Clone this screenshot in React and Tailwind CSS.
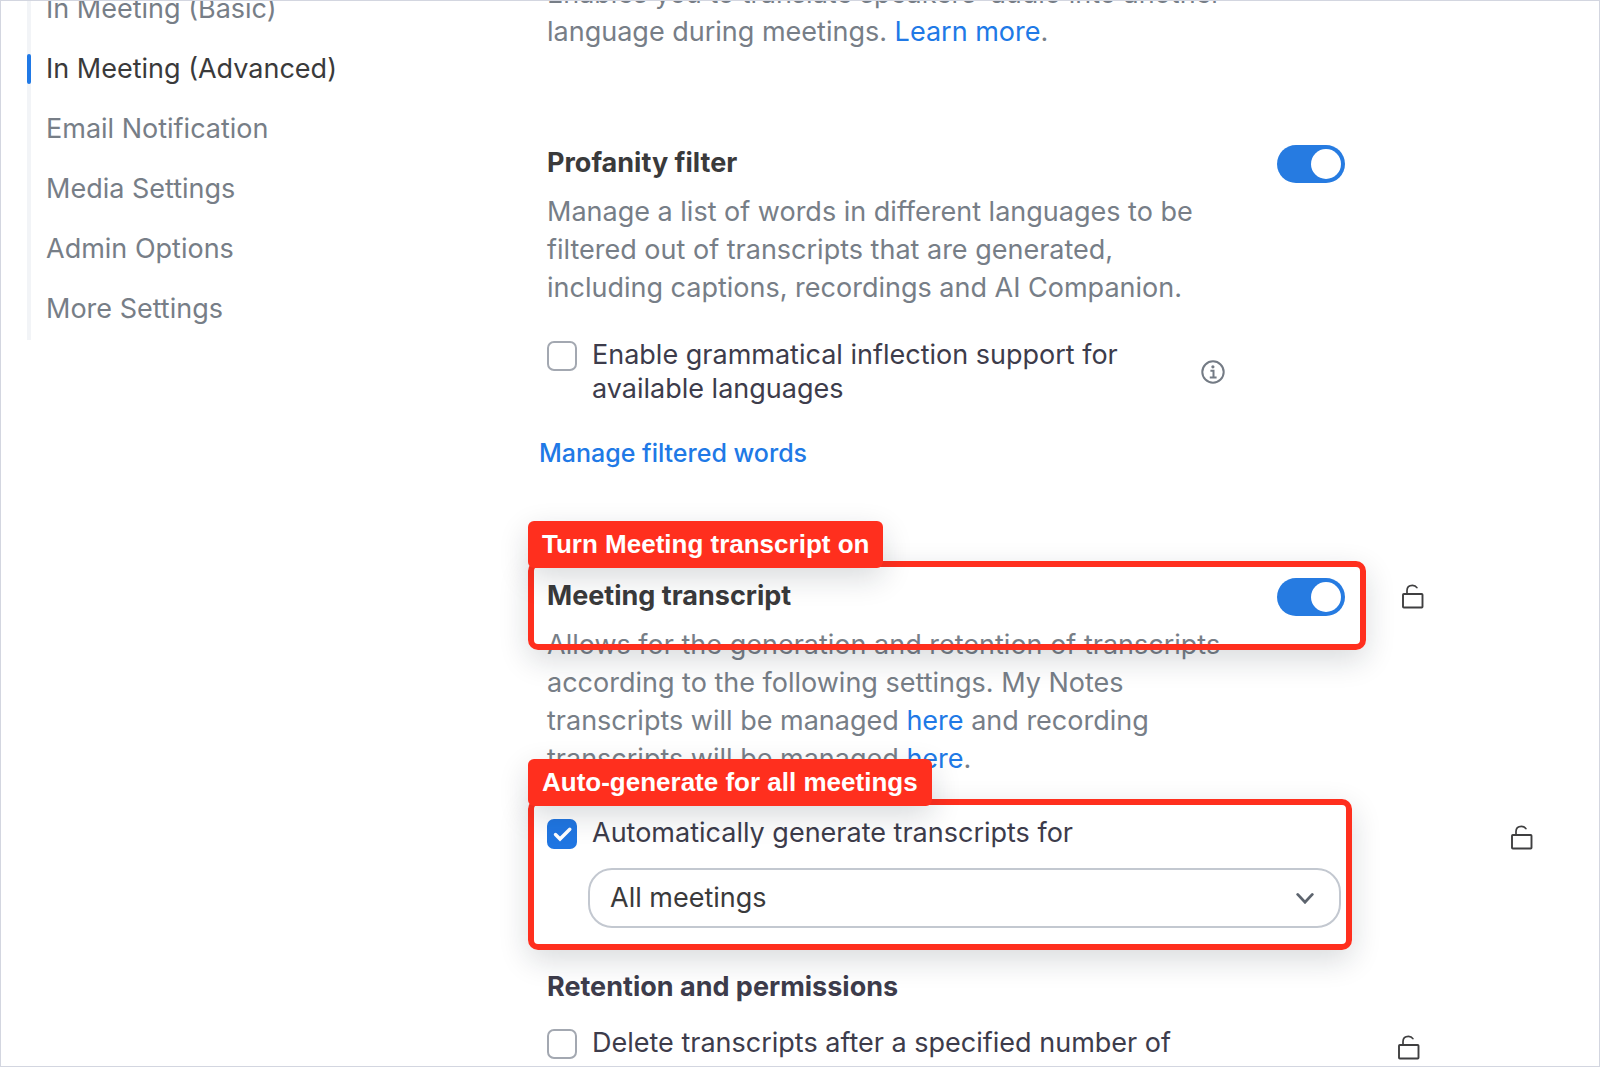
import { useState } from "react";

const NAV_ITEMS = [
  "In Meeting (Basic)",
  "In Meeting (Advanced)",
  "Email Notification",
  "Media Settings",
  "Admin Options",
  "More Settings",
];

function LockIcon({ className = "" }) {
  return (
    <svg
      viewBox="0 0 22 25"
      className={`h-[25px] w-[22px] shrink-0 ${className}`}
      fill="none"
      stroke="#3f3f40"
      aria-hidden="true"
    >
      <rect x="1" y="10" width="19.5" height="13.5" rx="0.8" strokeWidth="1.9" />
      <path d="M5 10V6.5C5 3.2 7.4 1.3 10.5 1.3C12.6 1.3 14 2.2 14.9 3.6" strokeWidth="1.7" strokeLinecap="round" />
    </svg>
  );
}

function InfoIcon() {
  return (
    <svg viewBox="0 0 24 24" className="h-6 w-6" fill="none" stroke="#747b85" aria-hidden="true">
      <circle cx="12" cy="12" r="10.7" strokeWidth="2" />
      <circle cx="11.9" cy="6.8" r="1.6" fill="#747b85" stroke="none" />
      <path d="M9.4 10.7H12.5V17.4M8.8 17.4H15.6" strokeWidth="2" />
    </svg>
  );
}

function Toggle({ label }) {
  const [on, setOn] = useState(true);
  return (
    <button
      type="button"
      role="switch"
      aria-checked={on}
      aria-label={label}
      onClick={() => setOn(!on)}
      className={`flex h-[38px] w-[68px] shrink-0 items-center rounded-full px-1 ${on ? "justify-end bg-[#267be1]" : "justify-start bg-[#a6abb4]"}`}
    >
      <span className="h-[30px] w-[30px] rounded-full bg-white" />
    </button>
  );
}

function CheckRow({ id, label, checked = false }) {
  return (
    <div className="flex items-start gap-[15px]">
      <span className="mt-[3px] grid h-[30px] w-[30px] shrink-0">
        <input
          id={id}
          type="checkbox"
          defaultChecked={checked}
          className="peer col-start-1 row-start-1 h-[30px] w-[30px] appearance-none rounded-[7px] border-2 border-[#a3a8b1] bg-white checked:border-[#2076e2] checked:bg-[#2076e2]"
        />
        <svg
          viewBox="0 0 30 30"
          className="pointer-events-none invisible col-start-1 row-start-1 h-[30px] w-[30px] peer-checked:visible"
          fill="none"
          stroke="white"
          strokeWidth="3.4"
          strokeLinecap="round"
          aria-hidden="true"
        >
          <path d="M8.5 15.5L13 20L22.8 10.2" />
        </svg>
      </span>
      <label htmlFor={id} className="leading-[34px] text-[#3d3c4b]">
        {label}
      </label>
    </div>
  );
}

function Callout({ children, className = "" }) {
  return (
    <div
      className={`pointer-events-none absolute z-10 rounded-[10px] border-6 border-[#ff2f1e] shadow-[0_10px_30px_rgba(20,30,45,0.16)] ${className}`}
    >
      <span className="absolute -top-[46px] -left-[6px] rounded-[6px] bg-[#ff2f1e] px-[14px] pt-[5px] pb-[6px] font-['Liberation_Sans',sans-serif] text-[26px] leading-[36px] font-bold whitespace-nowrap text-white shadow-[0_10px_30px_rgba(20,30,45,0.16)]">
        {children}
      </span>
    </div>
  );
}

function TextLink({ children, className = "" }) {
  return (
    <a href="#" className={`text-[#2079e6] ${className}`}>
      {children}
    </a>
  );
}

export default function App() {
  return (
    <div className="grid h-screen grid-cols-[546px_1fr] overflow-hidden border border-[#d3d6e0] bg-white font-['Inter',sans-serif] text-[27px] leading-[38px] text-[#777e87]">
      <nav aria-label="Settings sections" className="-mt-[7px] ml-[26px]">
        <ul className="flex flex-col gap-[30px] pb-4 shadow-[inset_4px_0_0_#f2f4f7]">
          {NAV_ITEMS.map((item) => {
            const active = item === "In Meeting (Advanced)";
            return (
              <li key={item} className="flex h-[30px] items-center gap-[15px]">
                <span className={`h-full w-1 rounded-[2px] ${active ? "bg-[#2079e6]" : ""}`} />
                <a
                  href="#"
                  aria-current={active ? "page" : undefined}
                  className={active ? "leading-[36px] text-[#3a3a3b]" : "leading-[36px]"}
                >
                  {item}
                </a>
              </li>
            );
          })}
        </ul>
      </nav>

      <main className="-mt-[26px]">
        <p>
          Enables you to translate speakers&rsquo; audio into another
          <br />
          language during meetings. <TextLink>Learn more</TextLink>.
        </p>

        <section className="mt-[94px]">
          <div className="flex max-w-[798px] items-center justify-between">
            <h2 className="pb-0.5 leading-[36px] font-bold text-[#3a3a3b]">Profanity filter</h2>
            <Toggle label="Profanity filter" />
          </div>
          <p className="mt-[10px]">
            Manage a list of words in different languages to be
            <br />
            filtered out of transcripts that are generated,
            <br />
            including captions, recordings and AI Companion.
          </p>
          <div className="mt-[31px] flex max-w-[678px] items-center justify-between">
            <CheckRow
              id="inflection"
              label={
                <>
                  Enable grammatical inflection support for
                  <br />
                  available languages
                </>
              }
            />
            <button type="button" aria-label="More information">
              <InfoIcon />
            </button>
          </div>
          <div className="-ml-2 mt-7">
            <TextLink className="text-[25px] font-medium">Manage filtered words</TextLink>
          </div>
        </section>

        <section className="mt-[106px]">
          <div className="relative flex items-center">
            <Callout className="-top-[17px] -left-[19px] h-[89px] w-[838px]">Turn Meeting transcript on</Callout>
            <div className="flex w-[798px] items-center justify-between">
              <h2 className="pb-0.5 leading-[36px] font-bold text-[#3a3a3b]">Meeting transcript</h2>
              <Toggle label="Meeting transcript" />
            </div>
            <LockIcon className="mb-0.5 ml-[57px]" />
          </div>
          <p className="mt-[10px]">
            Allows for the generation and retention of transcripts
            <br />
            according to the following settings. My Notes
            <br />
            transcripts will be managed <TextLink>here</TextLink> and recording
            <br />
            transcripts will be managed <TextLink>here</TextLink>.
          </p>

          <div className="relative mt-[37px]">
            <Callout className="-top-4 -left-[19px] h-[151px] w-[824px]">Auto-generate for all meetings</Callout>
            <div className="flex items-center">
              <div className="w-[964px]">
                <CheckRow id="auto-generate" label="Automatically generate transcripts for" checked />
              </div>
              <LockIcon className="mt-[10px]" />
            </div>
            <div className="mt-[18px] ml-[41px] grid w-[753px] items-center">
              <select
                aria-label="Automatically generate transcripts for"
                className="col-start-1 row-start-1 h-[60px] w-full appearance-none rounded-[24px] border-2 border-[#c3c8d0] bg-white px-5 text-[#3a3a3b]"
              >
                <option>All meetings</option>
              </select>
              <svg
                viewBox="0 0 18 12"
                className="pointer-events-none col-start-1 row-start-1 mr-[27px] h-3 w-[18px] justify-self-end"
                fill="none"
                stroke="#5d646e"
                strokeWidth="2.8"
                strokeLinecap="round"
                aria-hidden="true"
              >
                <path d="M1.7 2.4L9 10.2L16.3 2.4" />
              </svg>
            </div>
          </div>

          <h3 className="mt-10 font-bold text-[#3d3c4b]">Retention and permissions</h3>
          <div className="mt-[19px] flex items-center">
            <div className="w-[851px]">
              <CheckRow id="delete-transcripts" label="Delete transcripts after a specified number of" />
            </div>
            <LockIcon className="mt-[10px]" />
          </div>
        </section>
      </main>
    </div>
  );
}
